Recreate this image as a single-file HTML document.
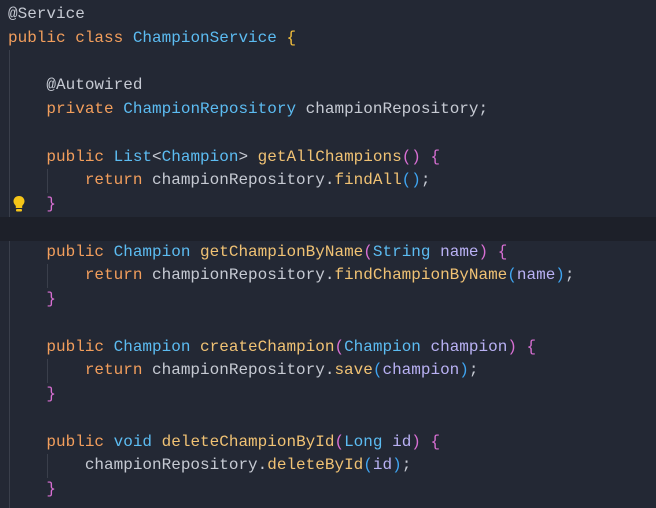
<!DOCTYPE html>
<html><head><style>
html,body{margin:0;padding:0;background:#232834;width:656px;height:507px;overflow:hidden}
.ed{position:absolute;left:0;top:3px;width:656px}
.l{position:relative;height:23.75px;line-height:23.75px;font-family:"Liberation Mono",monospace;font-size:16px;color:#c6cad3;white-space:pre;padding-left:8px}
.cur{background:#1d2029}
.k{color:#f29e5c}.t{color:#5cbcf2}.m{color:#f0c274}.p{color:#b9b1f4}
.b1{color:#f5c03c}.b2{color:#d86fd3}.b3{color:#3fa4f0}
.g{position:absolute;width:1px;background:#3a3f4b}
.bulb{position:absolute;left:12px;top:195px}
</style></head><body>
<div class="g" style="left:9px;top:50px;height:458px"></div>
<div class="g" style="left:47px;top:169px;height:24px"></div>
<div class="g" style="left:47px;top:264px;height:24px"></div>
<div class="g" style="left:47px;top:359px;height:24px"></div>
<div class="g" style="left:47px;top:454px;height:24px"></div>
<div class="ed">
<div class="l">@Service</div>
<div class="l"><span class="k">public class</span> <span class="t">ChampionService</span> <span class="b1">{</span></div>
<div class="l"> </div>
<div class="l">    @Autowired</div>
<div class="l">    <span class="k">private</span> <span class="t">ChampionRepository</span> championRepository;</div>
<div class="l"> </div>
<div class="l">    <span class="k">public</span> <span class="t">List</span>&lt;<span class="t">Champion</span>&gt; <span class="m">getAllChampions</span><span class="b2">()</span> <span class="b2">{</span></div>
<div class="l">        <span class="k">return</span> championRepository.<span class="m">findAll</span><span class="b3">()</span>;</div>
<div class="l">    <span class="b2">}</span></div>
<div class="l cur"> </div>
<div class="l">    <span class="k">public</span> <span class="t">Champion</span> <span class="m">getChampionByName</span><span class="b2">(</span><span class="t">String</span> <span class="p">name</span><span class="b2">)</span> <span class="b2">{</span></div>
<div class="l">        <span class="k">return</span> championRepository.<span class="m">findChampionByName</span><span class="b3">(</span><span class="p">name</span><span class="b3">)</span>;</div>
<div class="l">    <span class="b2">}</span></div>
<div class="l"> </div>
<div class="l">    <span class="k">public</span> <span class="t">Champion</span> <span class="m">createChampion</span><span class="b2">(</span><span class="t">Champion</span> <span class="p">champion</span><span class="b2">)</span> <span class="b2">{</span></div>
<div class="l">        <span class="k">return</span> championRepository.<span class="m">save</span><span class="b3">(</span><span class="p">champion</span><span class="b3">)</span>;</div>
<div class="l">    <span class="b2">}</span></div>
<div class="l"> </div>
<div class="l">    <span class="k">public</span> <span class="t">void</span> <span class="m">deleteChampionById</span><span class="b2">(</span><span class="t">Long</span> <span class="p">id</span><span class="b2">)</span> <span class="b2">{</span></div>
<div class="l">        championRepository.<span class="m">deleteById</span><span class="b3">(</span><span class="p">id</span><span class="b3">)</span>;</div>
<div class="l">    <span class="b2">}</span></div>
</div>
<svg class="bulb" width="14" height="18" viewBox="0 0 14 18"><path d="M7 1C3.7 1 1.5 3.4 1.5 6.2c0 2.3 1.5 3.4 2.3 4.8V13h6.4v-2c.8-1.4 2.3-2.5 2.3-4.8C12.5 3.4 10.3 1 7 1z" fill="#f5c518"/><rect x="4" y="14" width="6" height="2.5" rx="1" fill="#f5c518"/></svg>
</body></html>
